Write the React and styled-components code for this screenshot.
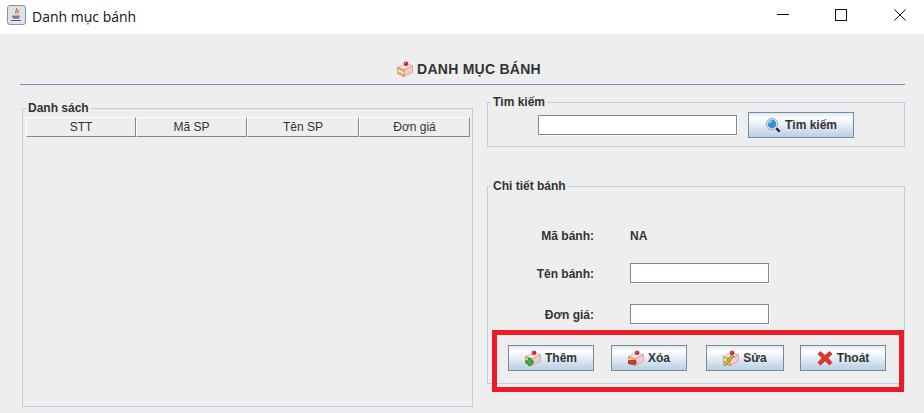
import React from "react";
import styled, { createGlobalStyle } from "styled-components";

const Global = createGlobalStyle`
  html, body { margin: 0; padding: 0; background: #eeeeee; }
  * { box-sizing: border-box; }
`;

const Window = styled.div`
  position: relative;
  width: 924px;
  height: 413px;
  overflow: hidden;
  background: #eeeeee;
  font-family: "Liberation Sans", Arial, sans-serif;
  font-size: 12px;
  color: #333333;
`;

const TitleBar = styled.header`
  height: 34px;
  background: #ffffff;
  display: flex;
  align-items: center;
  padding: 0 0 4px 7px;
  color: #111111;
`;

const WindowTitle = styled.span`
  margin-left: 6px;
  font-family: "Open Sans", "Noto Sans", sans-serif;
  font-size: 14px;
  flex: 1;
  position: relative;
  top: 1px;
`;

const WindowButton = styled.button`
  width: 46px;
  height: 30px;
  border: 0;
  padding: 0;
  background: transparent;
  display: flex;
  align-items: center;
  justify-content: center;
  &:first-child { margin-right: -1px; }
`;

const Controls = styled.div`
  display: flex;
  gap: 13px;
  padding-right: 1px;
`;

const Main = styled.main`
  padding: 0 19px 0 20px;
`;

const Heading = styled.h1`
  margin: 0;
  height: 51px;
  padding: 27px 0 0 13px;
  border-bottom: 1px solid #6d8fcb;
  display: flex;
  justify-content: center;
  gap: 4px;
  font-size: 14px;
  line-height: 16px;
  font-weight: 700;
  letter-spacing: 0.25px;
  color: #333333;
`;

const Columns = styled.div`
  display: grid;
  grid-template-columns: 451px 418px;
  column-gap: 14px;
  padding: 10px 0 0 2px;
  align-items: start;
`;

const Group = styled.fieldset`
  margin: ${(p) => p.$top || 0}px 0 0;
  padding: 0;
  height: ${(p) => p.$height}px;
  border: 1px solid #b8cfe5;
  min-width: 0;
`;

const GroupTitle = styled.legend`
  margin-left: 3px;
  padding: 0 2px;
  font-size: 12px;
  line-height: 14px;
  font-weight: 700;
  color: #333333;
`;

const HeaderRow = styled.div`
  margin: 2px 0 0 3px;
  width: 444px;
  height: 19px;
  display: grid;
  grid-template-columns: 110px 111px 112px 111px;
`;

const HeaderCell = styled.div`
  border-top: 1px solid #ffffff;
  border-left: 1px solid #ffffff;
  border-right: 1px solid #7a8a99;
  border-bottom: 1px solid #7a8a99;
  text-align: center;
  line-height: 18px;
  color: #333333;
`;

const RightColumn = styled.div`
  display: flex;
  flex-direction: column;
  gap: 32px;
`;

const SearchRow = styled.div`
  display: flex;
  align-items: center;
  padding: 3px 0 0 50px;
  gap: 11px;
`;

const TextInput = styled.div`
  width: ${(p) => p.$w}px;
  height: 20px;
  background: #ffffff;
  border: 1px solid #7a8a99;
  box-shadow: 1px 1px 0 #ffffff;
`;

const Button = styled.button`
  width: ${(p) => p.$w}px;
  height: 26px;
  margin-left: ${(p) => p.$gap || 0}px;
  padding: 0;
  border: 1px solid #7a8a99;
  background: linear-gradient(#dde8f3 0, #ffffff 22%, #b8cfe5 100%);
  display: flex;
  align-items: center;
  justify-content: center;
  gap: 4px;
  font-family: "Liberation Sans", Arial, sans-serif;
  font-size: 12px;
  font-weight: 700;
  color: #333333;
`;

const FormRow = styled.div`
  display: grid;
  grid-template-columns: 106px 139px;
  column-gap: 36px;
  height: 20px;
  align-items: center;
  margin-top: ${(p) => p.$top}px;
`;

const FieldLabel = styled.label`
  text-align: right;
  font-weight: 700;
  padding-top: 1px;
`;

const FieldValue = styled.span`
  font-weight: 700;
  padding-top: 1px;
`;

const Actions = styled.div`
  display: flex;
  margin-top: 21px;
  padding-left: 20px;
`;

const Highlight = styled.div`
  position: absolute;
  left: 492px;
  top: 330px;
  width: 412px;
  height: 62px;
  border: 5px solid #ed1c24;
  pointer-events: none;
`;

const Badge = ({ kind }) => {
  if (kind === "add")
    return <path d="M.8 10.8h2.4V8.4h2.6v2.4h2.4v2.6H5.8v2.2H3.2v-2.2H.8z" fill="#2fc03f" stroke="#0f7a1f" strokeWidth=".7" />;
  if (kind === "del")
    return <rect x=".5" y="10.5" width="7.5" height="3.6" rx=".8" fill="#d9382e" stroke="#8e1b16" strokeWidth=".7" />;
  if (kind === "edit")
    return (
      <g>
        <path d="M.8 15.6 L10.5 5" stroke="#6a5610" strokeWidth="2.8" />
        <path d="M.8 15.6 L10.5 5" stroke="#f2d03a" strokeWidth="1.5" />
      </g>
    );
  return null;
};

const Cake = ({ kind }) => (
  <svg width="16" height="16" viewBox="0 0 16 16">
    <path d="M.5 6.5 L9.5 2.5 L15.5 4.8 L7 9z" fill="#f9e3e1" stroke="#b79a8a" strokeWidth=".6" />
    <path d="M7 9 L15.5 4.8 V11.2 L7 15.7z" fill="#f7c9cc" stroke="#c08f8d" strokeWidth=".6" />
    <path d="M.5 6.5 L7 9 V15.7 L.5 12.5z" fill="#eeb968" stroke="#a9854f" strokeWidth=".6" />
    <path d="M.8 8.8 L6.8 11.2 V12.6 L.8 10.2z" fill="#fff4dc" />
    <circle cx="9" cy="2.7" r="2.3" fill="#cf1f2e" />
    <circle cx="8.4" cy="2" r=".7" fill="#f5a6a6" />
    <Badge kind={kind} />
  </svg>
);

const Magnifier = () => (
  <svg width="16" height="16" viewBox="0 0 16 16">
    <path d="M10.5 10.5 L14 14" stroke="#222" strokeWidth="2.4" strokeLinecap="round" />
    <circle cx="7" cy="7" r="5.8" fill="#e6eef5" stroke="#9fb0be" strokeWidth="1" />
    <circle cx="7" cy="7" r="4.4" fill="#2f93d8" />
    <path d="M4 6.5a3.2 3.2 0 0 1 3-2.7" stroke="#bfe4fa" strokeWidth="1.2" fill="none" />
  </svg>
);

const RedCross = () => (
  <svg width="16" height="16" viewBox="0 0 16 16">
    <path d="M3.5 1.5 L8 5.5 L12.5 1.5 L15 4 L10.8 8 L15 12.5 L12.5 15 L8 10.8 L3.5 15 L1 12.5 L5.2 8 L1 4z" fill="#e5342a" stroke="#b31d16" strokeWidth=".7" strokeLinejoin="round" />
  </svg>
);

const JavaIcon = () => (
  <svg width="19" height="20" viewBox="0 0 19 20">
    <rect x=".5" y=".5" width="18" height="19" rx="2.5" fill="#dfe3e8" stroke="#8b939c" />
    <path d="M9.5 3c1.5 2-1.8 3 -.6 5.5M11.5 5c.6 1.4-1.4 2-.6 3.5" stroke="#d9692a" strokeWidth="1.3" fill="none" />
    <path d="M5 10.5h8c0 2-1 3-2 3.2H7c-1-.2-2-1.2-2-3.2z" fill="#6f8094" />
    <path d="M4 15.5h10" stroke="#4d6076" strokeWidth="1" />
  </svg>
);

const App = () => (
  <Window>
    <Global />
    <TitleBar>
      <JavaIcon />
      <WindowTitle>Danh mục bánh</WindowTitle>
      <Controls>
        <WindowButton aria-label="minimize">
          <svg width="12" height="12" viewBox="0 0 12 12"><path d="M0 5.5h12" stroke="#111" /></svg>
        </WindowButton>
        <WindowButton aria-label="maximize">
          <svg width="12" height="12" viewBox="0 0 12 12"><rect x=".5" y=".5" width="11" height="11" fill="none" stroke="#111" /></svg>
        </WindowButton>
        <WindowButton aria-label="close">
          <svg width="12" height="12" viewBox="0 0 12 12"><path d="M.5.5l11 11M11.5.5l-11 11" stroke="#111" /></svg>
        </WindowButton>
      </Controls>
    </TitleBar>
    <Main>
      <Heading>
        <Cake />
        DANH MỤC BÁNH
      </Heading>
      <Columns>
        <Group $top={6} $height={306}>
          <GroupTitle>Danh sách</GroupTitle>
          <HeaderRow>
            <HeaderCell>STT</HeaderCell>
            <HeaderCell>Mã SP</HeaderCell>
            <HeaderCell>Tên SP</HeaderCell>
            <HeaderCell>Đơn giá</HeaderCell>
          </HeaderRow>
        </Group>
        <RightColumn>
          <Group $height={52}>
            <GroupTitle>Tìm kiếm</GroupTitle>
            <SearchRow>
              <TextInput $w={199} />
              <Button $w={106}>
                <Magnifier />
                Tìm kiếm
              </Button>
            </SearchRow>
          </Group>
          <Group $height={205}>
            <GroupTitle>Chi tiết bánh</GroupTitle>
            <FormRow $top={32}>
              <FieldLabel>Mã bánh:</FieldLabel>
              <FieldValue>NA</FieldValue>
            </FormRow>
            <FormRow $top={18}>
              <FieldLabel>Tên bánh:</FieldLabel>
              <TextInput $w={139} />
            </FormRow>
            <FormRow $top={21}>
              <FieldLabel>Đơn giá:</FieldLabel>
              <TextInput $w={139} />
            </FormRow>
            <Actions>
              <Button $w={86}><Cake kind="add" />Thêm</Button>
              <Button $w={76} $gap={17}><Cake kind="del" />Xóa</Button>
              <Button $w={78} $gap={19}><Cake kind="edit" />Sửa</Button>
              <Button $w={86} $gap={16}><RedCross />Thoát</Button>
            </Actions>
          </Group>
        </RightColumn>
      </Columns>
    </Main>
    <Highlight />
  </Window>
);

export default App;
